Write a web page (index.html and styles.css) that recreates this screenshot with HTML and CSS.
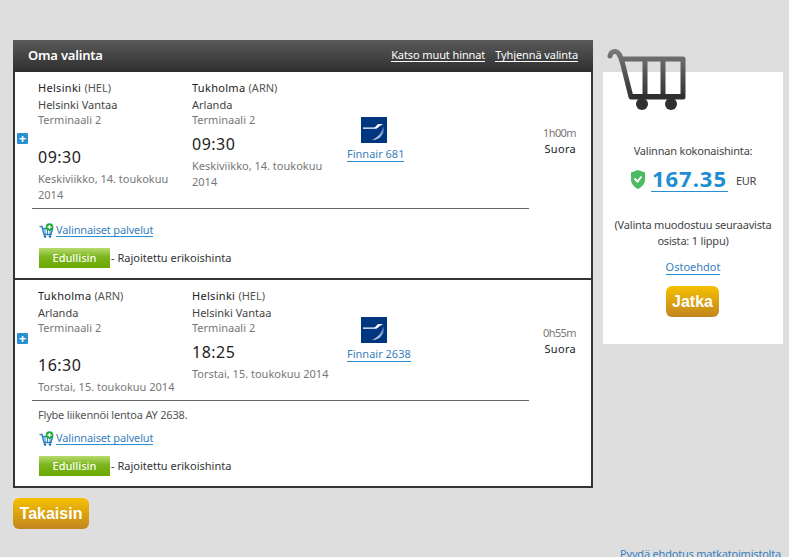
FILE: index.html
```html
<!DOCTYPE html>
<html lang="fi">
<head>
  <meta charset="UTF-8">
  <title>Oma valinta</title>
  <link rel="stylesheet" href="styles.css">
</head>
<body>
<svg class="defs" width="0" height="0">
  <defs>
    <linearGradient id="cartfade" gradientUnits="userSpaceOnUse" x1="0" y1="0" x2="0" y2="52">
      <stop offset="0" stop-color="#7d7d7d"/>
      <stop offset="1" stop-color="#2f2f2f"/>
    </linearGradient>
    <linearGradient id="wing" x1="0" y1="0" x2="0" y2="1">
      <stop offset="0" stop-color="#1d4f9c"/>
      <stop offset="1" stop-color="#dfeaf6"/>
    </linearGradient>
    <symbol id="finnair" viewBox="0 0 26 26">
      <rect width="26" height="26" fill="#003580"/>
      <path d="M22 9c-1 6-4 11-11 14 5 0 10-3 11.500-8 .5-2 .5-4-.5-6z" fill="url(#wing)"/>
      <path d="M2 10.500h11c2 0 2.500-3 4.500-3.500H22l-2 1.500c-2 0-2.500 3-5 3.200H2z" fill="#fff"/>
    </symbol>
    <symbol id="addcart" viewBox="0 0 15 15">
      <path d="M.5 3.500h2.500l2 8h7l1.500-6H4" fill="none" stroke="#2d83c4" stroke-width="1.500"/>
      <path d="M6 6v5M8.500 6v5M11 6v5" stroke="#2d83c4" stroke-width="1"/>
      <circle cx="6" cy="13.500" r="1.300" fill="#1f6ca8"/>
      <circle cx="11" cy="13.500" r="1.300" fill="#1f6ca8"/>
      <circle cx="10.500" cy="4" r="3.800" fill="#1fa83a"/>
      <path d="M10.500 2v4M8.500 4h4" stroke="#fff" stroke-width="1.300"/>
    </symbol>
  </defs>
</svg>

<div class="page">
  <div class="main">
    <div class="selection">
      <div class="selection-head">
        <h2>Oma valinta</h2>
        <div class="head-links">
          <a href="#">Katso muut hinnat</a>
          <a href="#">Tyhjennä valinta</a>
        </div>
      </div>

      <div class="segment">
        <div class="flight">
          <span class="expand">+</span>
          <div class="stop dep">
            <div class="city">Helsinki <span>(HEL)</span></div>
            <div class="airport">Helsinki Vantaa</div>
            <div class="terminal">Terminaali 2</div>
            <div class="time">09:30</div>
            <div class="date">Keskiviikko, 14. toukokuu 2014</div>
          </div>
          <div class="stop">
            <div class="city">Tukholma <span>(ARN)</span></div>
            <div class="airport">Arlanda</div>
            <div class="terminal">Terminaali 2</div>
            <div class="time">09:30</div>
            <div class="date">Keskiviikko, 14. toukokuu 2014</div>
          </div>
          <div class="carrier">
            <svg width="26" height="26"><use href="#finnair"/></svg>
            <a href="#">Finnair 681</a>
          </div>
          <div class="duration">1h00m<b>Suora</b></div>
        </div>
        <div class="extras">
          <div class="services">
            <svg width="15" height="15"><use href="#addcart"/></svg>
            <a href="#">Valinnaiset palvelut</a>
          </div>
          <div class="fare"><span class="fare-tag">Edullisin</span> - Rajoitettu erikoishinta</div>
        </div>
      </div>

      <div class="segment">
        <div class="flight">
          <span class="expand">+</span>
          <div class="stop dep">
            <div class="city">Tukholma <span>(ARN)</span></div>
            <div class="airport">Arlanda</div>
            <div class="terminal">Terminaali 2</div>
            <div class="time">16:30</div>
            <div class="date">Torstai, 15. toukokuu 2014</div>
          </div>
          <div class="stop">
            <div class="city">Helsinki <span>(HEL)</span></div>
            <div class="airport">Helsinki Vantaa</div>
            <div class="terminal">Terminaali 2</div>
            <div class="time">18:25</div>
            <div class="date">Torstai, 15. toukokuu 2014</div>
          </div>
          <div class="carrier">
            <svg width="26" height="26"><use href="#finnair"/></svg>
            <a href="#">Finnair 2638</a>
          </div>
          <div class="duration">0h55m<b>Suora</b></div>
        </div>
        <div class="extras">
          <p class="note">Flybe liikennöi lentoa AY 2638.</p>
          <div class="services">
            <svg width="15" height="15"><use href="#addcart"/></svg>
            <a href="#">Valinnaiset palvelut</a>
          </div>
          <div class="fare"><span class="fare-tag">Edullisin</span> - Rajoitettu erikoishinta</div>
        </div>
      </div>
    </div>
    <a href="#" class="btn back">Takaisin</a>
  </div>

  <div class="summary">
    <svg class="cart" width="80" height="64" viewBox="0 0 80 64">
      <path d="M3 9c1-5 6-6 9-2 2 3 3 7 4 11l8 32h52V12H15" fill="none" stroke="url(#cartfade)" stroke-width="5" stroke-linejoin="round" stroke-linecap="round"/>
      <path d="M38 12v38M56 12v38" stroke="url(#cartfade)" stroke-width="5"/>
      <rect x="25" y="47" width="53" height="5" fill="#2f2f2f"/>
      <circle cx="35" cy="57" r="6" fill="#2f2f2f"/>
      <circle cx="64" cy="57" r="6" fill="#2f2f2f"/>
    </svg>
    <div class="total-label">Valinnan kokonaishinta:</div>
    <div class="total">
      <svg width="14" height="19" viewBox="0 0 14 19">
        <path d="M7 0l7 2.500v7c0 4-3 7.500-7 9.500-4-2-7-5.500-7-9.500v-7z" fill="#4dbb5f"/>
        <path d="M3.500 8.500l3 3 4-5" fill="none" stroke="#fff" stroke-width="2"/>
      </svg>
      <a href="#" class="amount">167.35</a>
      <span class="currency">EUR</span>
    </div>
    <p class="parts">(Valinta muodostuu seuraavista osista: 1 lippu)</p>
    <a href="#" class="terms">Ostoehdot</a>
    <a href="#" class="btn next">Jatka</a>
  </div>
</div>

<div class="footer-link"><a href="#">Pyydä ehdotus matkatoimistolta</a></div>
</body>
</html>
```

FILE: styles.css
```css
html, body {
  height: 557px;
  overflow: hidden;
}

body {
  margin: 0;
  background: #dedede;
  color: #333;
  font-family: "Noto Sans", "DejaVu Sans", sans-serif;
  font-size: 11px;
  line-height: 16px;
}

a {
  color: #3a7fbd;
  text-decoration: none;
  border-bottom: 1px solid #2a8fd0;
}

.defs {
  display: block;
  height: 0;
}

.page {
  display: flex;
  gap: 10px;
  padding: 40px 0 0 13px;
}

.main {
  width: 580px;
}

.selection {
  background: #fff;
  border: 2px solid #333;
  border-top: none;
}

.selection-head {
  display: flex;
  justify-content: space-between;
  align-items: center;
  box-sizing: border-box;
  height: 32px;
  margin: 0 -2px;
  padding: 0 15px 2px;
  background: linear-gradient(#5a5a5a, #2e2e2e);
}

.selection-head h2 {
  margin: 0;
  color: #fff;
  font-size: 13px;
  font-weight: 600;
  letter-spacing: -.2px;
}

.head-links {
  display: flex;
  gap: 10px;
  letter-spacing: -.1px;
}

.head-links a {
  color: #fff;
  border-bottom-color: #fff;
  line-height: 13px;
}

.segment {
  height: 206px;
}

.segment + .segment {
  border-top: 2px solid #333;
}

.flight {
  position: relative;
  display: flex;
  padding: 8px 0 5px;
}

.expand {
  position: absolute;
  left: 2px;
  top: calc(50% - 7px);
  width: 11px;
  height: 11px;
  background: #2a8fd0;
  border-radius: 1px;
  color: #fff;
  font-size: 13px;
  font-weight: 700;
  line-height: 10px;
  text-align: center;
}

.stop {
  width: 154px;
  flex: none;
}

.stop.dep {
  margin-left: 23px;
}

.stop.dep .time {
  margin-top: 17px;
}

.city {
  color: #222;
  letter-spacing: .3px;
}

.city span {
  color: #555;
  letter-spacing: 0;
}

.airport {
  margin-top: 1px;
  color: #444;
}

.terminal {
  margin-top: -1px;
  color: #777;
}

.time {
  margin-top: 4px;
  color: #222;
  font-size: 16px;
  letter-spacing: .5px;
  line-height: 24px;
}

.date {
  margin-top: 2px;
  color: #777;
  width: 140px;
}

.carrier {
  display: flex;
  flex-direction: column;
  align-items: flex-start;
  gap: 4px;
  align-self: center;
  width: 56px;
  margin: -4px 0 0 1px;
  flex: none;
}

.carrier svg {
  display: block;
  margin-left: 14px;
}

.carrier a {
  line-height: 14px;
  white-space: nowrap;
}

.duration {
  flex: 1;
  align-self: center;
  margin-top: -2px;
  padding-right: 15px;
  color: #777;
  letter-spacing: -.6px;
  text-align: right;
}

.duration b {
  display: block;
  color: #222;
  font-weight: 400;
  letter-spacing: .3px;
}

.extras {
  margin: 0 62px 0 17px;
  padding: 13px 0 0 7px;
  border-top: 1px solid #666;
}

.note {
  margin: -7px 0 7px -1px;
  color: #555;
  letter-spacing: -.2px;
}

.services {
  display: flex;
  align-items: center;
  gap: 2px;
  height: 16px;
  letter-spacing: -.15px;
}

.services a {
  line-height: 13px;
}

.fare {
  display: flex;
  align-items: center;
  gap: 1px;
  margin-top: 10px;
  color: #333;
}

.fare-tag {
  width: 71px;
  height: 20px;
  background: linear-gradient(#b8da6f, #7ab51d 45%, #6aa800);
  color: #fff;
  font-weight: 500;
  line-height: 20px;
  text-align: center;
}

.btn {
  display: inline-block;
  border: none;
  border-radius: 6px;
  background: linear-gradient(#f6c000, #c2851f);
  color: #fff;
  font-family: "Liberation Sans", Arial, sans-serif;
  font-size: 16px;
  font-weight: 700;
  text-align: center;
}

.back {
  width: 76px;
  height: 31px;
  margin-top: 10px;
  line-height: 31px;
}

.summary {
  position: relative;
  box-sizing: border-box;
  width: 180px;
  height: 272px;
  margin-top: 32px;
  padding-top: 71px;
  background: #fff;
  text-align: center;
}

.cart {
  position: absolute;
  left: 4px;
  top: -25px;
}

.total-label {
  color: #444;
  letter-spacing: -.2px;
}

.total {
  display: flex;
  justify-content: center;
  align-items: flex-end;
  gap: 6px;
  margin-top: 7px;
  padding-left: 1px;
}

.total svg {
  margin-bottom: 3px;
}

.amount {
  padding: 0 1px;
  color: #1e8ed4;
  font-size: 22px;
  font-weight: 700;
  letter-spacing: 1px;
  line-height: 25px;
}

.currency {
  margin-left: 2px;
  color: #444;
  letter-spacing: -.3px;
  line-height: 22px;
}

.parts {
  margin: 25px 0 0;
  color: #444;
  letter-spacing: -.2px;
}

.terms {
  display: inline-block;
  margin-top: 11px;
  line-height: 14px;
}

.next {
  display: block;
  width: 53px;
  height: 31px;
  margin: 11px 0 0 63px;
  line-height: 31px;
}

.footer-link {
  margin-top: 17px;
  padding-right: 8px;
  letter-spacing: -.2px;
  text-align: right;
}

.footer-link a {
  border-bottom: none;
}
```
